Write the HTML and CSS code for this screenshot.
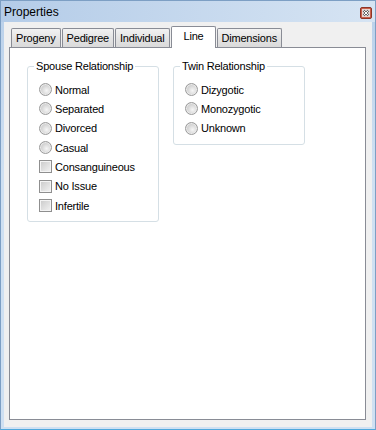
FILE: index.html
```html
<!DOCTYPE html>
<html lang="en">
<head>
    <meta charset="UTF-8">
    <title>Properties</title>
    <link rel="stylesheet" href="styles.css">
</head>
<body>
    <div class="window">
        <div class="titlebar">
            <span class="title">Properties</span>
            <span class="close">
                <svg width="12" height="12" viewBox="0 0 12 12">
                    <rect x="0.5" y="0.5" width="11" height="11" rx="1.5" fill="#c9604c" stroke="#8e3527"/>
                    <rect x="2" y="2" width="8" height="8" fill="#e8d6d2"/>
                    <path d="M3.5 3.5 L8.5 8.5 M8.5 3.5 L3.5 8.5" stroke="#5a5a5a" stroke-width="2.2"/>
                    <path d="M3.5 3.5 L8.5 8.5 M8.5 3.5 L3.5 8.5" stroke="#fff" stroke-width="1"/>
                </svg>
            </span>
        </div>
        <div class="client">
            <div class="tabs">
                <div class="tab">Progeny</div>
                <div class="tab">Pedigree</div>
                <div class="tab">Individual</div>
                <div class="tab active">Line</div>
                <div class="tab">Dimensions</div>
            </div>
            <div class="panel">
                <fieldset class="group">
                    <legend>Spouse Relationship</legend>
                    <div class="options">
                        <label class="option"><input type="radio" name="spouse"> Normal</label>
                        <label class="option"><input type="radio" name="spouse"> Separated</label>
                        <label class="option"><input type="radio" name="spouse"> Divorced</label>
                        <label class="option"><input type="radio" name="spouse"> Casual</label>
                        <label class="option"><input type="checkbox"> Consanguineous</label>
                        <label class="option"><input type="checkbox"> No Issue</label>
                        <label class="option"><input type="checkbox"> Infertile</label>
                    </div>
                </fieldset>
                <fieldset class="group">
                    <legend>Twin Relationship</legend>
                    <div class="options">
                        <label class="option"><input type="radio" name="twin"> Dizygotic</label>
                        <label class="option"><input type="radio" name="twin"> Monozygotic</label>
                        <label class="option"><input type="radio" name="twin"> Unknown</label>
                    </div>
                </fieldset>
            </div>
        </div>
    </div>
</body>
</html>
```

FILE: styles.css
```css
body {
    margin: 0;
    font-family: "Liberation Sans", Arial, sans-serif;
    font-size: 11px;
    letter-spacing: -0.2px;
    color: #000;
}
.window {
    box-sizing: border-box;
    width: 376px;
    height: 430px;
    display: flex;
    flex-direction: column;
    padding: 0 3px 2px 3px;
    border: 1px solid #7d9fc4;
    border-bottom-color: #4fa8dc;
    background: linear-gradient(to bottom, #b9d0ea, #cfe0f2 40%, #cfe0f2);
}
.titlebar {
    height: 21px;
    display: flex;
    align-items: center;
    justify-content: space-between;
    background: linear-gradient(to right, #b4cce8, #d6e4f3);
    margin: 0 -3px;
    padding: 0 3px 0 3px;
}
.title {
    font-size: 12px;
    letter-spacing: 0;
    padding-top: 1px;
}
.close {
    display: flex;
    margin-top: 2px;
}
.client {
    flex: 1;
    display: flex;
    flex-direction: column;
    background: #f0f0f0;
    padding: 4px 6px 7px 5px;
}
.tabs {
    display: flex;
    align-items: flex-end;
    padding-left: 2px;
    height: 21px;
    position: relative;
    z-index: 1;
}
.tab {
    height: 19px;
    box-sizing: border-box;
    padding: 3px 4px 0;
    margin-right: 1px;
    text-align: center;
    border: 1px solid #898c95;
    border-bottom: none;
    border-radius: 2px 2px 0 0;
    background: linear-gradient(to bottom, #f2f2f2, #e4e4e4 50%, #dadada);
    white-space: nowrap;
}
.tab.active {
    height: 22px;
    margin-bottom: -1px;
    padding: 3px 11px 0 12px;
    background: #fff;
}
.panel {
    flex: 1;
    display: flex;
    align-items: flex-start;
    gap: 14px;
    background: #fff;
    border: 1px solid #898c95;
    padding: 12px 0 0 17px;
}
.group {
    box-sizing: border-box;
    width: 132px;
    margin: 0;
    padding: 0 6px;
    border: 1px solid #d5dfe5;
    border-radius: 3px;
}
.group legend {
    padding: 0 2px;
    line-height: 13px;
}
.options {
    padding: 7px 0 6px 5px;
}
.option {
    display: flex;
    align-items: center;
    height: 19.33px;
    white-space: nowrap;
}
.option input {
    appearance: none;
    -webkit-appearance: none;
    width: 13px;
    height: 13px;
    margin: 0 3px 0 0;
    box-sizing: border-box;
    border: 1px solid #8f8f8f;
    background: linear-gradient(135deg, #c9c9c9, #f3f3f3);
    box-shadow: inset 0 0 0 1px #f4f4f4;
}
.option input[type="radio"] {
    border-radius: 50%;
    border-color: #9b9b9b;
    background: radial-gradient(circle at 60% 60%, #f6f6f6, #d4d4d4 55%, #c4c4c4);
    box-shadow: inset 0 0 0 1px #eaeaea;
}
```
